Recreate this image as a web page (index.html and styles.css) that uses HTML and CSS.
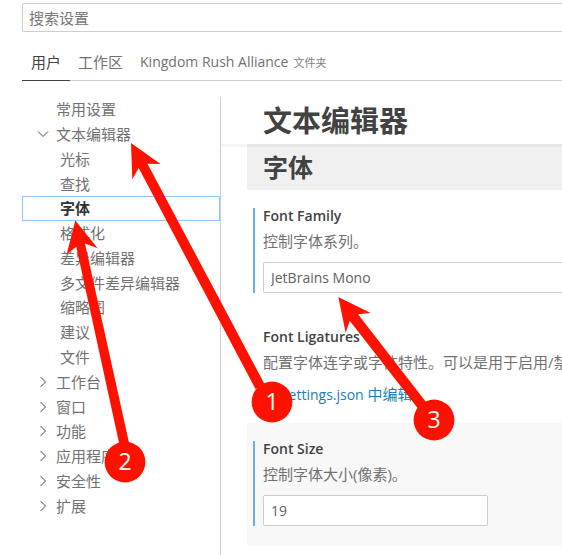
FILE: index.html
```html
<!DOCTYPE html>
<html lang="zh-CN">
<head>
<meta charset="utf-8">
<title>设置</title>
<link rel="stylesheet" href="styles.css">
</head>
<body>
<div class="settings">
  <input class="search" type="search" placeholder="搜索设置" aria-label="搜索设置">
  <div class="tabs" role="tablist">
    <button class="tab tab-active" role="tab" aria-selected="true">用户</button>
    <button class="tab" role="tab">工作区</button>
    <button class="tab" role="tab"><span class="latin">Kingdom Rush Alliance</span><small class="tab-note">文件夹</small></button>
  </div>
  <div class="body">
    <nav class="tree" aria-label="设置目录">
      <button class="node">常用设置</button>
      <button class="node"><svg class="chevron" viewBox="0 0 12 12"><path d="M1 3.500 6 8.500 11 3.500"/></svg>文本编辑器</button>
      <button class="node child">光标</button>
      <button class="node child">查找</button>
      <button class="node child selected">字体</button>
      <button class="node child">格式化</button>
      <button class="node child">差异编辑器</button>
      <button class="node child">多文件差异编辑器</button>
      <button class="node child">缩略图</button>
      <button class="node child">建议</button>
      <button class="node child">文件</button>
      <button class="node"><svg class="chevron" viewBox="0 0 12 12"><path d="M3.500 1 8.500 6 3.500 11"/></svg>工作台</button>
      <button class="node"><svg class="chevron" viewBox="0 0 12 12"><path d="M3.500 1 8.500 6 3.500 11"/></svg>窗口</button>
      <button class="node"><svg class="chevron" viewBox="0 0 12 12"><path d="M3.500 1 8.500 6 3.500 11"/></svg>功能</button>
      <button class="node"><svg class="chevron" viewBox="0 0 12 12"><path d="M3.500 1 8.500 6 3.500 11"/></svg>应用程序</button>
      <button class="node"><svg class="chevron" viewBox="0 0 12 12"><path d="M3.500 1 8.500 6 3.500 11"/></svg>安全性</button>
      <button class="node"><svg class="chevron" viewBox="0 0 12 12"><path d="M3.500 1 8.500 6 3.500 11"/></svg>扩展</button>
    </nav>
    <main class="content">
      <h1 class="title">文本编辑器</h1>
      <h2 class="group">字体</h2>
      <section class="setting">
        <div class="setting-inner modified">
          <label class="name" for="font-family">Font Family</label>
          <p class="desc">控制字体系列。</p>
          <input class="field field-wide" id="font-family" type="text" value="JetBrains Mono">
        </div>
      </section>
      <section class="setting">
        <div class="setting-inner">
          <h3 class="name">Font Ligatures</h3>
          <p class="desc">配置字体连字或字体特性。可以是用于启用/禁</p>
          <a class="edit-link" href="#settings-json">在 <span class="latin">settings.json</span> 中编辑</a>
        </div>
      </section>
      <section class="setting setting-focused">
        <div class="setting-inner modified">
          <label class="name" for="font-size">Font Size</label>
          <p class="desc">控制字体大小(像素)。</p>
          <input class="field field-short" id="font-size" type="text" value="19">
        </div>
      </section>
    </main>
  </div>
</div>
<svg class="callouts" width="562" height="555" viewBox="0 0 562 555">
  <path d="M131 143 160.500 164 147.500 163.700 264.500 384 255.500 389 138.700 168 132.300 179.300Z"/>
  <path d="M75.300 220.500 97.700 248.300 85 243.500 129.500 445 119.500 445 76.300 246.700 66.700 254.300Z"/>
  <path d="M338.300 297 370.700 313 358 314.300 426 402 418 408.500 349.700 320.700 345.700 332.700Z"/>
  <circle cx="272" cy="402" r="20.400"/>
  <circle cx="125" cy="462" r="20.400"/>
  <circle cx="434" cy="420" r="20.400"/>
  <text x="272" y="410">1</text>
  <text x="125" y="470">2</text>
  <text x="434" y="428">3</text>
</svg>
</body>
</html>
```

FILE: styles.css
```css
* {
  box-sizing: border-box;
}

body {
  margin: 0;
  background: #fff;
  color: #717171;
  font: 15px/22px "Open Sans", "Noto Sans CJK SC", sans-serif;
  font-weight: 400;
}

button,
input {
  font: inherit;
  color: inherit;
}

button {
  border: 0;
  background: none;
  padding: 0;
  text-align: left;
  white-space: nowrap;
}

.latin {
  font-size: 14px;
  line-height: 16px;
}

.settings {
  display: flex;
  flex-direction: column;
  min-height: 100vh;
  padding: 3px 0 0 22px;
  overflow: hidden;
}

.search {
  appearance: none;
  width: 100%;
  height: 29px;
  padding: 0 6px;
  border: 1px solid #cecece;
  border-right: 0;
  border-radius: 2px 0 0 2px;
  background: #fff;
}

.search::placeholder {
  color: #767676;
  opacity: 1;
}

.tabs {
  display: flex;
  height: 39px;
  margin-top: 10px;
  border-bottom: 1px solid #cecece;
}

.tab {
  height: 39px;
  padding: 0 9px 0 8px;
}

.tab-active {
  color: #424242;
  padding-left: 9px;
  box-shadow: inset 0 -1px #424242;
}

.tab-note {
  margin-left: 5px;
  font-size: 11px;
  color: #808080;
}

.body {
  display: flex;
  flex: 1;
  margin-top: 16px;
}

.tree {
  display: grid;
  grid-auto-rows: 1fr;
  align-self: flex-start;
  flex: 0 0 198px;
  height: 421px;
}

.node {
  display: flex;
  align-items: center;
  min-height: 0;
  padding-left: 34px;
}

.node:has(.chevron) {
  padding-left: 15px;
}

.child {
  padding-left: 38px;
}

.selected {
  padding-left: 37px;
  border: 1px solid #90c2f9;
  color: #333;
  font-weight: 700;
}

.chevron {
  width: 12px;
  height: 12px;
  margin-right: 7px;
  fill: none;
  stroke: #4c4c4c;
}

.content {
  flex: 1;
  min-width: 0;
  border-left: 1px solid #cecece;
}

.title {
  position: relative;
  margin: 0;
  padding-left: 42px;
  color: #424242;
  font-size: 29px;
  line-height: 47px;
  box-shadow: 0 3px 0 rgba(0, 0, 0, 0.04);
}

.group {
  margin: 0 0 0 26px;
  padding-left: 16px;
  background: #f0f0f0;
  color: #424242;
  font-size: 25px;
  line-height: 46px;
}

.setting {
  margin-left: 26px;
  padding: 18px 0 18px 6px;
}

.setting-focused {
  padding-bottom: 20px;
  background: #f8f8f8;
}

.setting-inner {
  padding-left: 8px;
  border-left: 2px solid transparent;
}

.modified {
  border-color: #66afe0;
}

.name {
  display: block;
  margin: 0;
  color: #424242;
  font-size: 14px;
  font-weight: 600;
  line-height: 16px;
}

.desc {
  margin: 6px 0 10px;
  overflow: hidden;
  white-space: nowrap;
}

.field {
  display: block;
  height: 31px;
  padding: 0 7px;
  border: 1px solid #cecece;
  border-radius: 2px;
  background: #fff;
  color: #616161;
  font-size: 14px;
}

.field-wide {
  width: 100%;
  border-right: 0;
  border-radius: 2px 0 0 2px;
}

.field-short {
  width: 225px;
}

.edit-link {
  display: block;
  color: #1a7bbd;
  text-decoration: none;
}

.callouts {
  position: absolute;
  top: 0;
  left: 0;
  fill: #ff1100;
  pointer-events: none;
}

.callouts text {
  fill: #fff;
  font-size: 23px;
  text-anchor: middle;
}
```
